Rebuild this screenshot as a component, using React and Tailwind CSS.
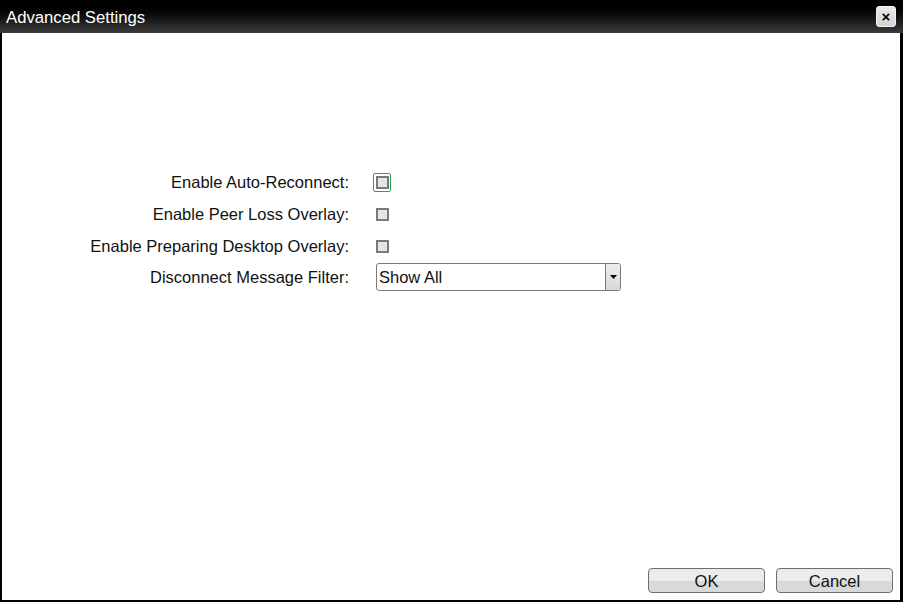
import React, { useState } from "react";

const font = { fontFamily: '"Liberation Sans", Arial, sans-serif' };

function Checkbox({ checked, onChange, focused }) {
  return (
    <div className={`w-[18px] h-[19px] flex items-center justify-center rounded-[2px] ${focused ? "border-[1.5px] border-[#2ea44f]" : "border border-transparent"}`}>
      <button
        onClick={onChange}
        className="w-[13px] h-[13px] border-2 border-[#7a7a7a] bg-[#e6e6e6] flex items-center justify-center text-[10px] leading-none"
      >
        {checked ? "✓" : ""}
      </button>
    </div>
  );
}

export default function App() {
  const [autoReconnect, setAutoReconnect] = useState(false);
  const [peerLoss, setPeerLoss] = useState(false);
  const [preparing, setPreparing] = useState(false);

  return (
    <div className="w-[903px] h-[604px] flex flex-col bg-white text-[#111]" style={font}>
      {/* title bar */}
      <div className="h-[33px] flex items-center justify-between pl-[6px] pr-[7px] bg-gradient-to-b from-[#000000] to-[#3c3c3c]">
        <span className="text-white text-[16.7px] leading-none pt-[3px]">Advanced Settings</span>
        <button className="w-[20px] h-[21px] rounded-[3px] bg-gradient-to-b from-[#e8e8e8] to-[#d4d4d4] border border-[#f4f4f4] flex items-center justify-center text-[15px] font-bold leading-none text-black">
          ×
        </button>
      </div>

      {/* body */}
      <div className="flex-1 flex flex-col border-l-2 border-r-[3px] border-b-2 border-black">
        <div className="flex-1 pt-[133px]">
          <div className="grid grid-cols-[347px_1fr] gap-x-[27px] items-center text-[16.5px]">
            <div className="h-[32px] flex items-center justify-end">Enable Auto-Reconnect:</div>
            <div className="h-[32px] flex items-center -ml-[3px]">
              <Checkbox checked={autoReconnect} onChange={() => setAutoReconnect(!autoReconnect)} focused />
            </div>

            <div className="h-[32px] flex items-center justify-end">Enable Peer Loss Overlay:</div>
            <div className="h-[32px] flex items-center -ml-[3px]">
              <Checkbox checked={peerLoss} onChange={() => setPeerLoss(!peerLoss)} />
            </div>

            <div className="h-[32px] flex items-center justify-end">Enable Preparing Desktop Overlay:</div>
            <div className="h-[32px] flex items-center -ml-[3px]">
              <Checkbox checked={preparing} onChange={() => setPreparing(!preparing)} />
            </div>

            <div className="h-[30px] flex items-center justify-end">Disconnect Message Filter:</div>
            <div className="h-[30px] flex items-center">
              <div className="w-[245px] h-[28px] flex border border-[#7a7a7a] rounded-[3px] bg-white overflow-hidden">
                <div className="flex-1 flex items-center pl-[2px] text-[16.5px]">Show All</div>
                <div className="w-[15px] border-l border-[#7a7a7a] bg-gradient-to-b from-[#eeeeee] to-[#d8d8d8] flex items-center justify-center">
                  <svg width="7" height="4" viewBox="0 0 7 4"><path d="M0 0h7L3.5 4z" fill="#000" /></svg>
                </div>
              </div>
            </div>
          </div>
        </div>

        {/* footer buttons */}
        <div className="flex justify-end gap-[11px] pr-[7px] pb-[7px]">
          <button className="w-[117px] h-[25px] rounded-[4px] border border-[#6e6e6e] bg-gradient-to-b from-[#ececec] from-50% to-[#d9d9d9] to-50% text-[16.5px] leading-none pt-[2px]">
            OK
          </button>
          <button className="w-[117px] h-[25px] rounded-[4px] border border-[#6e6e6e] bg-gradient-to-b from-[#ececec] from-50% to-[#d9d9d9] to-50% text-[16.5px] leading-none pt-[2px]">
            Cancel
          </button>
        </div>
      </div>
      <div className="h-[2px] bg-white" />
    </div>
  );
}
